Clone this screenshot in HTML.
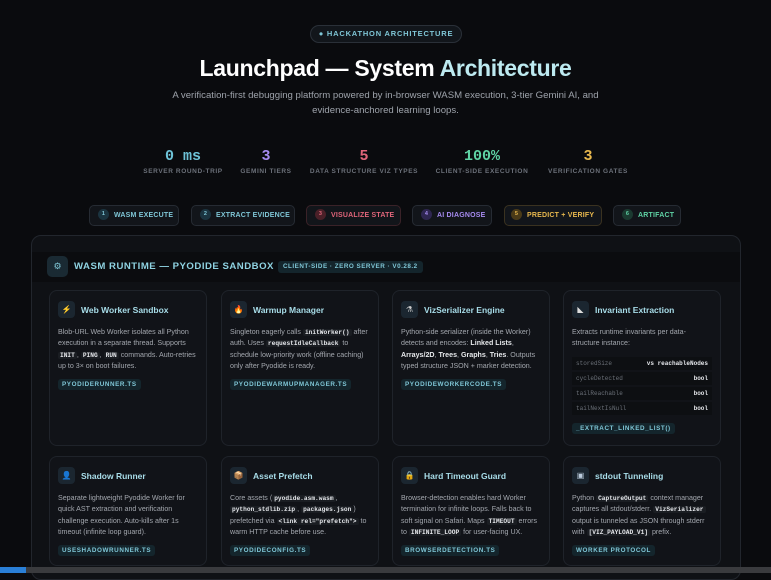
<!DOCTYPE html>
<html><head><meta charset="utf-8"><style>
*{margin:0;padding:0;box-sizing:border-box}
body{width:771px;height:573px;overflow:hidden;background:#0a0b0e;font-family:"Liberation Sans",sans-serif;color:#c9ccd2;position:relative}
.abs{position:absolute}
.pill{left:310px;top:25px;width:152px;height:18px;border:1px solid #2a3038;border-radius:9px;background:#12161b;color:#7fc6d6;font-size:7.5px;font-weight:bold;letter-spacing:.8px;text-align:center;line-height:16px}
h1{position:absolute;left:0;width:771px;top:55px;text-align:center;font-size:23px;font-weight:bold;color:#fff;letter-spacing:-.3px}
h1 span{color:#bdeaf0}
.sub{left:160px;width:451px;top:88px;text-align:center;font-size:9.6px;line-height:15px;color:#9ea3ab}
.stat{top:148px;text-align:center}
.stat b{display:block;font-family:"Liberation Mono",monospace;font-size:15px;font-weight:bold}
.stat i{display:block;font-style:normal;font-size:6.5px;letter-spacing:.6px;color:#6c717a;margin-top:3px;font-weight:bold}
.step{top:205px;height:21px;border:1px solid #262b33;border-radius:5px;background:#12151a;font-size:7px;font-weight:bold;line-height:19px;padding-left:8px;letter-spacing:.2px;white-space:nowrap}
.step em{display:inline-block;width:11px;height:11px;border-radius:50%;font-style:normal;font-size:5.5px;text-align:center;line-height:11px;margin-right:5px;vertical-align:middle;position:relative;top:-1px}
.panel{left:31px;top:235px;width:710px;height:345px;border:1px solid #22262d;border-radius:10px;background:#0f1115}
.hdr{left:32px;top:252px;width:708px;height:30px;background:#0b0c0f}
.hicon{left:47px;top:256px;width:21px;height:21px;border-radius:5px;background:#1a2a33;color:#7fc6d6;font-size:9px;text-align:center;line-height:21px}
.htitle{left:74px;top:261px;font-size:9.6px;font-weight:bold;letter-spacing:.5px;color:#8fd3e2;white-space:nowrap}
.hbadge{left:278px;top:261px;height:12px;padding:0 5px;border-radius:3px;background:#14252c;color:#7fc6d6;font-size:6.3px;font-weight:bold;letter-spacing:.5px;line-height:12px}
.card{width:158px;border:1px solid #1f232a;border-radius:8px;background:#111318;padding:10px 8px;overflow:hidden}
.card .ic{width:17px;height:17px;border-radius:4px;background:#1b2630;display:inline-block;text-align:center;line-height:17px;font-size:8px;vertical-align:middle}
.card .t{display:inline-block;vertical-align:middle;margin-left:6px;font-size:8.5px;font-weight:bold;color:#a8dde9}
.card p{margin-top:8px;font-size:7.1px;line-height:11.4px;color:#a3a7ae}
.card code{font-family:"Liberation Mono",monospace;font-size:6.2px;background:#1a1d22;color:#e4e6ea;padding:0 2px;border-radius:2px;font-weight:bold}
.card b{color:#e6e8eb}
.tag{display:inline-block;margin-top:5px;font-size:6.3px;font-weight:bold;letter-spacing:.6px;color:#7fc6d6;background:#14252c;padding:2px 4px;border-radius:3px;white-space:nowrap}
table{margin-top:5px;width:100%;border-collapse:separate;border-spacing:0 2px;font-family:"Liberation Mono",monospace;font-size:6px}
td{background:#0d0f12;padding:2px 4px;height:13px;white-space:nowrap}
td:first-child{color:#6b7078}td:last-child{text-align:right;color:#e4e6ea;font-weight:bold}
</style></head><body>
<div class="abs pill">● HACKATHON ARCHITECTURE</div>
<h1>Launchpad — System <span>Architecture</span></h1>
<div class="abs sub">A verification-first debugging platform powered by in-browser WASM execution, 3-tier Gemini AI, and evidence-anchored learning loops.</div>

<div class="abs stat" style="left:140px;width:86px"><b style="color:#6ec3d8">0 ms</b><i>SERVER ROUND-TRIP</i></div>
<div class="abs stat" style="left:236px;width:60px"><b style="color:#a68bf0">3</b><i>GEMINI TIERS</i></div>
<div class="abs stat" style="left:308px;width:112px"><b style="color:#e0657a">5</b><i>DATA STRUCTURE VIZ TYPES</i></div>
<div class="abs stat" style="left:434px;width:96px"><b style="color:#5fd3a5">100%</b><i>CLIENT-SIDE EXECUTION</i></div>
<div class="abs stat" style="left:544px;width:88px"><b style="color:#e8b84e">3</b><i>VERIFICATION GATES</i></div>

<div class="abs step" style="left:89px;width:90px;color:#7fc6d6"><em style="background:#1b3440;color:#7fc6d6">1</em>WASM EXECUTE</div>
<div class="abs step" style="left:191px;width:104px;color:#7fc6d6"><em style="background:#1b3440;color:#7fc6d6">2</em>EXTRACT EVIDENCE</div>
<div class="abs step" style="left:306px;width:95px;color:#e0657a;border-color:#3a2228"><em style="background:#4a2028;color:#e0657a">3</em>VISUALIZE STATE</div>
<div class="abs step" style="left:412px;width:80px;color:#a68bf0"><em style="background:#2e2650;color:#a68bf0">4</em>AI DIAGNOSE</div>
<div class="abs step" style="left:504px;width:98px;color:#e8b84e;border-color:#3a3220;padding-left:6px"><em style="background:#4a3a18;color:#e8b84e">5</em>PREDICT + VERIFY</div>
<div class="abs step" style="left:613px;width:68px;color:#5fd3a5"><em style="background:#1b3a30;color:#5fd3a5">6</em>ARTIFACT</div>

<div class="abs panel"></div>
<div class="abs hdr"></div>
<div class="abs hicon">⚙</div>
<div class="abs htitle">WASM RUNTIME — PYODIDE SANDBOX</div>
<div class="abs hbadge">CLIENT-SIDE · ZERO SERVER · V0.28.2</div>

<div class="abs card" style="left:49px;top:290px;height:156px"><span class="ic" style="color:#e8b84e">⚡</span><span class="t">Web Worker Sandbox</span>
<p>Blob-URL Web Worker isolates all Python execution in a separate thread. Supports <code>INIT</code>, <code>PING</code>, <code>RUN</code> commands. Auto-retries up to 3× on boot failures.</p><span class="tag">PYODIDERUNNER.TS</span></div>
<div class="abs card" style="left:221px;top:290px;height:156px"><span class="ic" style="color:#f08a3c">🔥</span><span class="t">Warmup Manager</span>
<p>Singleton eagerly calls <code>initWorker()</code> after auth. Uses <code>requestIdleCallback</code> to schedule low-priority work (offline caching) only after Pyodide is ready.</p><span class="tag">PYODIDEWARMUPMANAGER.TS</span></div>
<div class="abs card" style="left:392px;top:290px;height:156px"><span class="ic" style="color:#ccc">⚗</span><span class="t">VizSerializer Engine</span>
<p>Python-side serializer (inside the Worker) detects and encodes: <b>Linked Lists</b>, <b>Arrays/2D</b>, <b>Trees</b>, <b>Graphs</b>, <b>Tries</b>. Outputs typed structure JSON + marker detection.</p><span class="tag">PYODIDEWORKERCODE.TS</span></div>
<div class="abs card" style="left:563px;top:290px;height:156px"><span class="ic" style="color:#ddd">◣</span><span class="t">Invariant Extraction</span>
<p>Extracts runtime invariants per data-structure instance:</p>
<table><tr><td>storedSize</td><td>vs reachableNodes</td></tr><tr><td>cycleDetected</td><td>bool</td></tr><tr><td>tailReachable</td><td>bool</td></tr><tr><td>tailNextIsNull</td><td>bool</td></tr></table>
<span class="tag" style="margin-top:3px">_EXTRACT_LINKED_LIST()</span></div>

<div class="abs card" style="left:49px;top:456px;height:110px"><span class="ic" style="color:#9ab">👤</span><span class="t">Shadow Runner</span>
<p>Separate lightweight Pyodide Worker for quick AST extraction and verification challenge execution. Auto-kills after 1s timeout (infinite loop guard).</p><span class="tag">USESHADOWRUNNER.TS</span></div>
<div class="abs card" style="left:221px;top:456px;height:110px"><span class="ic" style="color:#c98">📦</span><span class="t">Asset Prefetch</span>
<p>Core assets (<code>pyodide.asm.wasm</code>, <code>python_stdlib.zip</code>, <code>packages.json</code>) prefetched via <code>&lt;link rel="prefetch"&gt;</code> to warm HTTP cache before use.</p><span class="tag">PYODIDECONFIG.TS</span></div>
<div class="abs card" style="left:392px;top:456px;height:110px"><span class="ic" style="color:#e8c84e">🔒</span><span class="t">Hard Timeout Guard</span>
<p>Browser-detection enables hard Worker termination for infinite loops. Falls back to soft signal on Safari. Maps <code>TIMEOUT</code> errors to <code>INFINITE_LOOP</code> for user-facing UX.</p><span class="tag">BROWSERDETECTION.TS</span></div>
<div class="abs card" style="left:563px;top:456px;height:110px"><span class="ic" style="color:#bcd">▣</span><span class="t">stdout Tunneling</span>
<p>Python <code>CaptureOutput</code> context manager captures all stdout/stderr. <code>VizSerializer</code> output is tunneled as JSON through stderr with <code>[VIZ_PAYLOAD_V1]</code> prefix.</p><span class="tag">WORKER PROTOCOL</span></div>

<div class="abs" style="left:0;top:567px;width:771px;height:6px;background:#3a3b3e"></div>
<div class="abs" style="left:0;top:567px;width:26px;height:6px;background:#2a7fd6"></div>
</body></html>
